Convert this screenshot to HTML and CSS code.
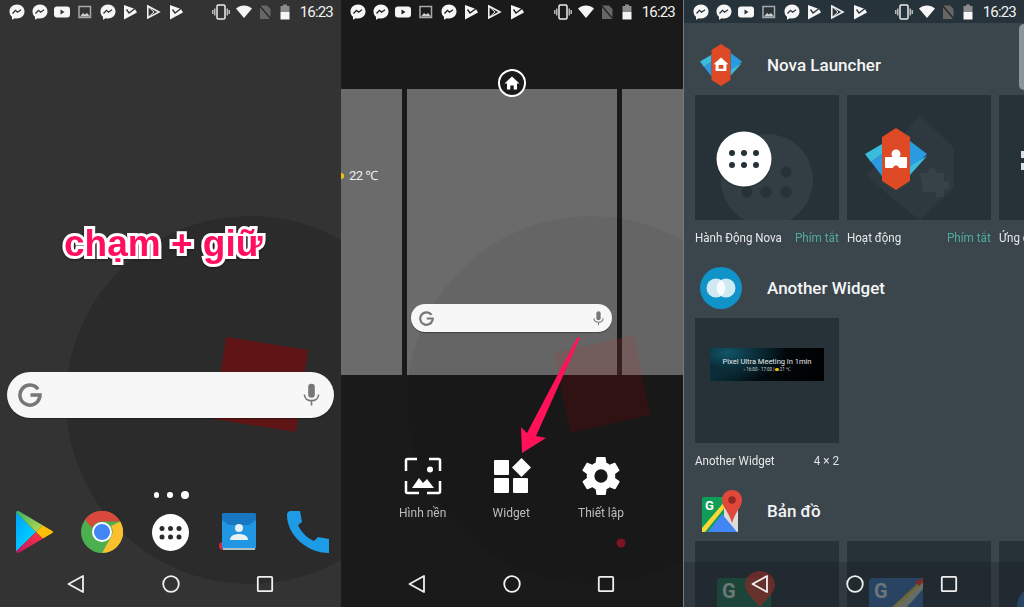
FILE: index.html
```html
<!DOCTYPE html>
<html lang="vi">
<head>
<meta charset="utf-8">
<title>Nova Launcher</title>
<link rel="stylesheet" href="styles.css">
</head>
<body>
<svg class="defs" aria-hidden="true">
  <defs>
    <linearGradient id="pa" x1="0" y1="0" x2="1" y2="1"><stop offset="0" stop-color="#00a0ff"/><stop offset="1" stop-color="#00e2ff"/></linearGradient>
    <linearGradient id="pb" x1="0" y1="0" x2="1" y2="1"><stop offset="0" stop-color="#2fb36b"/><stop offset="1" stop-color="#c8d84a"/></linearGradient>
    <linearGradient id="pc" x1="1" y1="0" x2="0" y2="1"><stop offset="0" stop-color="#ff3a44"/><stop offset="1" stop-color="#c31162"/></linearGradient>
  </defs>
  <symbol id="msg" viewBox="0 0 16 16"><path class="white" d="M8 .5c4.300 0 7.500 3.100 7.500 7s-3.200 7-7.500 7c-.8 0-1.500-.1-2.200-.3L3 15.800v-3C1.400 11.500.5 9.600.5 7.500c0-3.900 3.200-7 7.500-7z"/><path class="cut" d="M3.500 9.500 6.500 6.300 8.500 8.200 12 5.800"/></symbol>
  <symbol id="yt" viewBox="0 0 16 16"><rect class="white" x="0" y="2.500" width="16" height="11" rx="3"/><path class="cutfill" d="M6.500 5.500 10.500 8l-4 2.500z"/></symbol>
  <symbol id="pic" viewBox="0 0 16 16"><rect x="2" y="2.500" width="11.500" height="11" fill="none" stroke="#a9a9a9" stroke-width="1.500"/><path d="M3 12.500 6 9l2 1.500 2-1.500 3 3.500z" fill="#cfcfcf"/></symbol>
  <symbol id="flag" viewBox="0 0 16 16"><path class="white" d="M2 1 13 5 15 8.500 2 15.500z"/><path class="cut" d="M4.500 5.500 7 9 15 3"/></symbol>
  <symbol id="play" viewBox="0 0 16 16"><path d="M2.800 2 14 8 2.800 14z" fill="none" stroke="#eee" stroke-width="1.600"/><path d="M3 2.500 9 8l-6 5.500" fill="none" stroke="#eee" stroke-width="1"/></symbol>
  <symbol id="vib" viewBox="0 0 18 16"><rect x="5" y="1" width="8" height="14" rx="1.300" fill="none" stroke="#eee" stroke-width="1.500"/><path d="M2.800 4.500v7M.8 6v4M15.200 4.500v7M17.200 6v4" stroke="#ddd" stroke-width="1.200"/></symbol>
  <symbol id="wifi" viewBox="0 0 16 16"><path class="white" d="M0 4.500C4.500.5 11.500.5 16 4.500L8 14z"/></symbol>
  <symbol id="nosim" viewBox="0 0 14 16"><path d="M2 1.500h7l3.500 3.500v10H2z" fill="#666"/><path d="M1 1 13 15" stroke="#262626" stroke-width="1.300"/></symbol>
  <symbol id="bat" viewBox="0 0 14 16"><path d="M5 .5h4V2h2.500v6h-9V2H5z" fill="#8b8b8b"/><path class="white" d="M2.500 8h9v7.500h-9z"/></symbol>
  <symbol id="back" viewBox="0 0 18 18"><path d="M1.500 9 16 1v16z" fill="none" stroke="#f0f0f0" stroke-width="1.800" stroke-linejoin="round"/></symbol>
  <symbol id="circ" viewBox="0 0 18 18"><circle cx="9" cy="9" r="7.800" fill="none" stroke="#f0f0f0" stroke-width="1.800"/></symbol>
  <symbol id="sqr" viewBox="0 0 18 18"><rect x="1.800" y="1.800" width="14.400" height="14.400" rx="1" fill="none" stroke="#f0f0f0" stroke-width="1.800"/></symbol>
  <symbol id="g" viewBox="0 0 24 24"><path d="M20 6.200A10 10 0 1 0 21.500 15c.4-1 .5-2 .5-3h-9.500" fill="none" stroke="#777" stroke-width="3.500"/></symbol>
  <symbol id="mic" viewBox="0 0 18 24"><rect x="5.500" y="0" width="7" height="15" rx="3.500" fill="#777"/><path d="M1.500 11.500c0 4 3.300 6.500 7.500 6.500s7.500-2.500 7.500-6.500M9 18v5" fill="none" stroke="#777" stroke-width="1.700"/></symbol>
  <symbol id="novabase" viewBox="0 0 62 62">
    <path d="M0 26 6 34 17 26v22z" fill="#2a9be0"/><path d="M0 26 17 16v10L6 34z" fill="#3bbcdc"/>
    <path d="M62 26 45 13v25l10-5z" fill="#2a9be0"/><path d="M62 28 45 38v9z" fill="#3bbcdc"/>
    <path d="M17 9 31 0l14 9v44L31 62 17 53z" fill="#df4a26"/>
  </symbol>
  <symbol id="maps" viewBox="0 0 42 42">
    <rect x="2" y="7" width="36" height="35" rx="2" fill="#0f9d58"/>
    <path d="M24 7h14v35H24z" fill="#dcdcdc"/>
    <path d="M8 42 22 24l15 18z" fill="#4285f4"/>
    <path d="M2 38 26 10l5 0L5 42H2z" fill="#fdd835"/>
    <path d="M32 0c-6 0-10 4.500-10 10 0 7 7 12 10 23 3-11 10-16 10-23 0-5.500-4-10-10-10z" fill="#e0483b"/>
    <circle cx="32" cy="10" r="3.800" fill="#8e2a22"/>
  </symbol>
</svg>

<main class="screens">

  <section class="phone phone-home">
    <svg class="wall" viewBox="0 0 341 607"><circle cx="250" cy="400" r="184" fill="#2b2b2b"/><path d="M226 337 308 350 296 432 214 419z" fill="#5f1515"/></svg>
    <div class="status">
      <div class="st-left">
        <svg class="si"><use href="#msg"/></svg><svg class="si"><use href="#msg"/></svg><svg class="si"><use href="#yt"/></svg><svg class="si"><use href="#pic"/></svg><svg class="si"><use href="#msg"/></svg><svg class="si"><use href="#flag"/></svg><svg class="si"><use href="#play"/></svg><svg class="si"><use href="#flag"/></svg>
      </div>
      <div class="st-right">
        <svg class="si-v"><use href="#vib"/></svg><svg class="si"><use href="#wifi"/></svg><svg class="si-n"><use href="#nosim"/></svg><svg class="si-n"><use href="#bat"/></svg><span class="clock">16:23</span>
      </div>
    </div>
    <h1 class="hero">chạm + giữ</h1>
    <div class="search">
      <svg class="search-g"><use href="#g"/></svg>
      <svg class="search-m"><use href="#mic"/></svg>
    </div>
    <div class="pager"><i class="dot"></i><i class="dot"></i><i class="dot on"></i></div>
    <div class="dock">
      <svg class="app app-play" viewBox="0 0 37 42">
        <path d="M0 1.500V40.500L20 21z" fill="url(#pa)"/>
        <path d="M0 1.500c.5-1.500 2-1.800 3.500-1L27 14.500 20 21z" fill="url(#pb)"/>
        <path d="M0 40.500c.5 1.500 2 1.800 3.500 1L27 27.500 20 21z" fill="url(#pc)"/>
        <path d="M27 14.500 35.500 19.500c2 1.200 2 2 0 3L27 27.500 20 21z" fill="#ffc107"/>
      </svg>
      <svg class="app app-chrome" viewBox="0 0 42 42">
        <circle cx="21" cy="21" r="21" fill="#4caf50"/>
        <path d="M4 8.500A21 21 0 0 1 39.200 10.500H21A10.500 10.500 0 0 0 11 17z" fill="#d9483b"/>
        <path d="M39.200 10.500A21 21 0 0 1 21 42L30 26A10.500 10.500 0 0 0 30 15z" fill="#fbc02d"/>
        <circle cx="21" cy="21" r="10" fill="#fff"/><circle cx="21" cy="21" r="8" fill="#4285f4"/>
      </svg>
      <svg class="app app-drawer" viewBox="0 0 37 37">
        <circle cx="18.500" cy="18.500" r="18.500" fill="#fff"/>
        <g fill="#2c2c2c"><circle cx="10" cy="14.500" r="2.500"/><circle cx="18.500" cy="14.500" r="2.500"/><circle cx="27" cy="14.500" r="2.500"/><circle cx="10" cy="23" r="2.500"/><circle cx="18.500" cy="23" r="2.500"/><circle cx="27" cy="23" r="2.500"/></g>
      </svg>
      <svg class="app app-contacts" viewBox="0 0 40 40">
        <circle cx="4" cy="34" r="4" fill="#d7263d"/>
        <rect x="3" y="1" width="34" height="36" rx="1.500" fill="#1976c2"/>
        <path d="M4 36h32v2H4z" fill="#b0bec5"/>
        <path d="M3 8 10 13H30L37 8V36H3z" fill="#2196e3"/>
        <circle cx="20" cy="16" r="4" fill="#e8f1f6"/>
        <path d="M11 28c0-4 4-6 9-6s9 2 9 6z" fill="#e8f1f6"/>
      </svg>
      <svg class="app app-phone" viewBox="0 0 42 42">
        <path d="M4 0 13 0 15 11 11 14C14 21 20 27 27 30L31 26 42 28V42C20 42 0 24 0 4 0 2 1 0 4 0z" fill="#1d9be6"/>
      </svg>
    </div>
    <nav class="nav"><svg class="nv"><use href="#back"/></svg><svg class="nv"><use href="#circ"/></svg><svg class="nv"><use href="#sqr"/></svg></nav>
  </section>

  <section class="phone phone-edit">
    <div class="status">
      <div class="st-left">
        <svg class="si"><use href="#msg"/></svg><svg class="si"><use href="#msg"/></svg><svg class="si"><use href="#yt"/></svg><svg class="si"><use href="#pic"/></svg><svg class="si"><use href="#msg"/></svg><svg class="si"><use href="#flag"/></svg><svg class="si"><use href="#play"/></svg><svg class="si"><use href="#flag"/></svg>
      </div>
      <div class="st-right">
        <svg class="si-v"><use href="#vib"/></svg><svg class="si"><use href="#wifi"/></svg><svg class="si-n"><use href="#nosim"/></svg><svg class="si-n"><use href="#bat"/></svg><span class="clock">16:23</span>
      </div>
    </div>
    <div class="homebtn">
      <svg viewBox="0 0 16 16" class="homeicon"><path d="M8 1.500 15.500 8.500H13V14.500H9.700V10.500H6.300V14.500H3V8.500H.5z" fill="#fff"/></svg>
    </div>
    <div class="previews">
      <div class="pv pv-side"><div class="weather"><i class="sun"></i><span>22 ℃</span></div></div>
      <div class="pv pv-main">
        <div class="search search-mini">
          <svg class="mini-g"><use href="#g"/></svg>
          <svg class="mini-m"><use href="#mic"/></svg>
        </div>
      </div>
      <div class="pv pv-right"></div>
    </div>
    <svg class="wall wall-over" viewBox="0 0 342 607">
      <circle cx="250" cy="400" r="184" fill="rgba(0,0,0,.05)"/>
      <path d="M293 335 301 375H217.400L213 353z" fill="rgba(170,60,60,.2)"/>
      <path d="M217.400 375H301L309 415 229 433z" fill="rgba(125,0,0,.25)"/>
      <circle cx="280" cy="543" r="4.500" fill="#7a1420"/>
    </svg>
    <div class="menu">
      <div class="menu-item">
        <svg class="mi" viewBox="0 0 38 38"><path d="M13 2H3.500A1.500 1.500 0 0 0 2 3.500V14M25 2h9.500A1.500 1.500 0 0 1 36 3.500V14M2 24v10.500A1.500 1.500 0 0 0 3.500 36H15M36 24v10.500A1.500 1.500 0 0 1 34.500 36H23" fill="none" stroke="#fff" stroke-width="2.500"/><circle cx="26" cy="12.500" r="3" fill="#fff"/><path d="M8 31 15 21 19 26 23 22 30 31z" fill="#fff"/></svg>
        <span class="mi-label">Hình nền</span>
      </div>
      <div class="menu-item">
        <svg class="mi" viewBox="0 0 38 38"><rect x="1" y="3" width="15" height="15" rx="1" fill="#fff"/><path d="M28.500 1 38 10.500 28.500 20 19 10.500z" fill="#fff"/><rect x="1" y="21" width="15" height="15" rx="1" fill="#fff"/><rect x="20" y="21" width="15" height="15" rx="1" fill="#fff"/></svg>
        <span class="mi-label">Widget</span>
      </div>
      <div class="menu-item">
        <svg class="mi" viewBox="2.200 2 19.600 20"><path fill="#fff" fill-rule="evenodd" d="M19.400 13c.04-.32.1-.66.1-1s-.06-.68-.1-1l2.100-1.650c.2-.15.25-.42.12-.64l-2-3.460c-.12-.22-.38-.3-.6-.22l-2.500 1c-.52-.4-1.060-.72-1.700-.98l-.37-2.650A.5.500 0 0 0 14 2h-4c-.25 0-.46.18-.5.420l-.37 2.650c-.63.260-1.170.580-1.700.98l-2.500-1c-.22-.08-.48 0-.6.220l-2 3.460c-.13.220-.07.490.12.640L4.600 11c-.04.320-.1.660-.1 1s.06.680.1 1l-2.100 1.650c-.19.150-.25.420-.12.640l2 3.460c.12.220.38.300.6.220l2.500-1c.53.400 1.070.720 1.700.980l.37 2.650c.04.240.25.420.5.420h4c.25 0 .46-.18.5-.42l.37-2.650c.63-.26 1.170-.58 1.700-.98l2.500 1c.22.080.48 0 .6-.22l2-3.460c.13-.22.070-.49-.12-.64zM12 15.500a3.500 3.500 0 1 1 0-7 3.500 3.500 0 0 1 0 7z"/></svg>
        <span class="mi-label">Thiết lập</span>
      </div>
    </div>
    <svg class="arrow" viewBox="0 0 342 607"><path d="M236.500 337 186 433 180 427 181 453 205 438 195 436 239 338z" fill="#ff1258"/></svg>
    <nav class="nav"><svg class="nv"><use href="#back"/></svg><svg class="nv"><use href="#circ"/></svg><svg class="nv"><use href="#sqr"/></svg></nav>
  </section>

  <section class="phone phone-widgets">
    <div class="status">
      <div class="st-left">
        <svg class="si"><use href="#msg"/></svg><svg class="si"><use href="#msg"/></svg><svg class="si"><use href="#yt"/></svg><svg class="si"><use href="#pic"/></svg><svg class="si"><use href="#msg"/></svg><svg class="si"><use href="#flag"/></svg><svg class="si"><use href="#play"/></svg><svg class="si"><use href="#flag"/></svg>
      </div>
      <div class="st-right">
        <svg class="si-v"><use href="#vib"/></svg><svg class="si"><use href="#wifi"/></svg><svg class="si-n"><use href="#nosim"/></svg><svg class="si-n"><use href="#bat"/></svg><span class="clock">16:23</span>
      </div>
    </div>
    <div class="scrollthumb"></div>
    <div class="list">
      <header class="app-head">
        <svg class="head-icon" viewBox="0 0 62 62"><use href="#novabase"/><path d="M31 20 42 30h-3v10H23V30h-3zM27.500 31v5.500h7V31z" fill="#fff" fill-rule="evenodd"/></svg>
        <h2 class="head-title">Nova Launcher</h2>
      </header>
      <div class="cards">
        <div class="card-col">
          <div class="card">
            <svg class="card-art" viewBox="0 0 144 125">
              <circle cx="72" cy="85" r="46" fill="#323e44"/>
              <g fill="#263238"><circle cx="91" cy="77" r="5.500"/><circle cx="52" cy="97" r="5.500"/><circle cx="71" cy="97" r="5.500"/><circle cx="91" cy="97" r="5.500"/></g>
              <circle cx="49" cy="65" r="28" fill="#1b2327" opacity=".4"/>
              <circle cx="49" cy="64" r="27.500" fill="#fff"/>
              <g fill="#263238"><circle cx="37" cy="58" r="3"/><circle cx="49" cy="58" r="3"/><circle cx="61" cy="58" r="3"/><circle cx="37" cy="70" r="3"/><circle cx="49" cy="70" r="3"/><circle cx="61" cy="70" r="3"/></g>
            </svg>
          </div>
          <div class="card-label"><span class="lb-l">Hành Động Nova</span><span class="lb-r teal">Phím tắt</span></div>
        </div>
        <div class="card-col">
          <div class="card">
            <svg class="card-art" viewBox="0 0 144 125">
              <path d="M73 20 107 53v40L73 125 47 105 20 80l27-30z" fill="#2d393f"/>
              <path d="M73 78h8c0-6 7-6 8-3v3h8v8h5v8h-5v8H89v-5H76z" fill="#364248"/>
              <svg x="18" y="33" width="62" height="62" viewBox="0 0 62 62"><use href="#novabase"/>
                <rect x="20" y="29" width="22" height="11" rx="1" fill="#fff"/><circle cx="31" cy="26" r="4.500" fill="#fff"/><circle cx="31" cy="40.500" r="3" fill="#df4a26"/>
              </svg>
            </svg>
          </div>
          <div class="card-label"><span class="lb-l">Hoạt động</span><span class="lb-r teal">Phím tắt</span></div>
        </div>
        <div class="card-col">
          <div class="card">
            <svg class="card-art" viewBox="0 0 144 125"><g fill="#fff" opacity=".85"><rect x="22" y="56" width="3" height="7"/><rect x="22" y="68" width="3" height="7"/></g></svg>
          </div>
          <div class="card-label"><span class="lb-l">Ứng dụng</span></div>
        </div>
      </div>
      <header class="app-head">
        <svg class="head-icon" viewBox="0 0 42 42"><circle cx="21" cy="21" r="21" fill="#0f93c9"/><circle cx="16" cy="21" r="9.500" fill="#fff" opacity=".8"/><circle cx="26" cy="21" r="9.500" fill="#fff" opacity=".8"/></svg>
        <h2 class="head-title">Another Widget</h2>
      </header>
      <div class="cards">
        <div class="card-col">
          <div class="card card-center">
            <div class="awidget">
              <span class="aw-title">Pixel Ultra Meeting in 1min</span>
              <span class="aw-sub">▫ 16:00 - 17:00 | <i class="aw-sun"></i> 21 ℃</span>
            </div>
          </div>
          <div class="card-label"><span class="lb-l">Another Widget</span><span class="lb-r size">4 × 2</span></div>
        </div>
      </div>
      <header class="app-head">
        <svg class="head-icon" viewBox="0 0 42 42"><use href="#maps"/><text x="5" y="20" class="mapg">G</text></svg>
        <h2 class="head-title">Bản đồ</h2>
      </header>
      <div class="cards">
        <div class="card-col"><div class="card card-ghost">
          <svg class="ghost-art" viewBox="0 0 144 66"><rect x="22" y="37" width="54" height="40" rx="4" fill="#1b8a5a" opacity=".4"/><text x="27" y="57" class="ghost-g">G</text><path d="M65 30c-8 0-15 6-15 14 0 8 9 14 15 22 6-8 15-14 15-22 0-8-7-14-15-14z" fill="#a5352c" opacity=".75"/></svg>
        </div></div>
        <div class="card-col"><div class="card card-ghost">
          <svg class="ghost-art" viewBox="0 0 144 66"><path d="M22 41a4 4 0 0 1 4-4h50v29H22z" fill="#3a6aa8" opacity=".6"/><text x="27" y="57" class="ghost-g">G</text><path d="M76 40v8L60 66H46z" fill="#808a7e"/><path d="M76 37v5L50 66h-5z" fill="#96843c" opacity=".8"/><path d="M76 37v4L72 45 68 41z" fill="#a5352c"/></svg>
        </div></div>
        <div class="card-col"><div class="card card-ghost">
          <svg class="ghost-art" viewBox="0 0 144 66"><circle cx="40" cy="66" r="22" fill="#3a6aa8" opacity=".6"/></svg>
        </div></div>
      </div>
    </div>
    <nav class="nav nav-over"><svg class="nv"><use href="#back"/></svg><svg class="nv"><use href="#circ"/></svg><svg class="nv"><use href="#sqr"/></svg></nav>
  </section>
</main>
</body>
</html>
```

FILE: styles.css
```css
* { box-sizing: border-box; }
html, body { margin: 0; padding: 0; height: 607px; overflow: hidden; background: #333; }
body { font-family: Roboto, "Noto Sans", sans-serif; color: #fff; }
.defs { position: absolute; width: 0; height: 0; }
.white { fill: #f6f6f6; }
.cut { fill: none; stroke: var(--bar); stroke-width: 1.300; }
.cutfill { fill: var(--bar); }
.mapg { font-family: Roboto, sans-serif; font-weight: 700; font-size: 13px; fill: #fff; }
.ghost-g { font-family: Roboto, sans-serif; font-weight: 700; font-size: 20px; fill: #8a9a96; }

.screens { display: grid; grid-template-columns: 341px 342px 341px; height: 607px; }
.phone { position: relative; height: 607px; overflow: hidden; display: flex; flex-direction: column; }
.phone-home { --bar: #333; background: #333; }
.phone-edit { --bar: #1a1a1a; background: #1a1a1a; }
.phone-widgets { --bar: #27333a; background: #3a464c; border-left: 1px solid #77797b; }

.wall { position: absolute; left: 0; top: 0; width: 100%; height: 607px; }
.wall-over { z-index: 1; pointer-events: none; }

.status { position: relative; z-index: 2; flex: none; height: 24px; display: flex; align-items: center; justify-content: space-between; padding: 0 8px 0 9px; background: var(--bar); }
.phone-widgets .status { height: 23px; }
.st-left { display: flex; gap: 6.700px; align-items: center; }
.st-right { display: flex; gap: 6px; align-items: center; }
.si { width: 16px; height: 16px; display: block; }
.si-v { width: 18px; height: 16px; display: block; }
.si-n { width: 14px; height: 16px; display: block; }
.clock { margin-left: 2px; font-size: 15px; letter-spacing: -.8px; color: #f2f2f2; line-height: 16px; }

.hero { position: relative; z-index: 1; flex: none; height: 42px; margin: 199px 0 0 64px; font: 700 37px/42px "Liberation Sans", Arial, sans-serif; color: #ff0f5e; -webkit-text-stroke: 6px #fff; paint-order: stroke fill; white-space: nowrap; filter: drop-shadow(0 1px 1px rgba(0,0,0,.35)); }

.search { position: relative; z-index: 1; flex: none; margin: 107px 7px 0; height: 46px; border-radius: 23px; background: #f7f7f7; display: flex; align-items: center; justify-content: space-between; padding: 0 14px 0 11px; box-shadow: 0 1px 1px rgba(0,0,0,.35); }
.search-g { width: 24px; height: 24px; }
.search-m { width: 17px; height: 24px; }
.search-mini { z-index: 2; margin: 215px 5px 0 4px; height: 28px; border-radius: 14px; padding: 0 8px 0 8px; }
.mini-g { width: 15px; height: 15px; }
.mini-m { width: 11px; height: 15px; }

.pager { position: relative; z-index: 1; flex: none; height: 10px; margin-top: 72px; display: flex; align-items: center; justify-content: center; gap: 8px; padding-left: 1px; }
.dot { width: 5.500px; height: 5.500px; border-radius: 50%; background: #fff; }
.dot.on { width: 8px; height: 8px; }

.dock { position: relative; z-index: 1; flex: none; margin-top: 10px; height: 44px; display: flex; align-items: center; padding-left: 16px; }
.app { display: block; flex: none; }
.app-play { width: 37px; height: 42px; }
.app-chrome { width: 42px; height: 42px; margin-left: 28px; }
.app-drawer { width: 37px; height: 37px; margin-left: 29px; }
.app-contacts { width: 40px; height: 40px; margin-left: 30px; }
.app-phone { width: 42px; height: 42px; margin-left: 28px; }

.nav { position: relative; z-index: 2; flex: none; display: flex; gap: 76.500px; padding-left: 67px; height: 18px; margin-top: 21px; }
.nv { width: 18px; height: 18px; display: block; }
.nav-over { position: absolute; left: 0; right: 0; bottom: 0; height: 45px; margin: 0; padding-top: 13px; background: rgba(15,20,25,.25); z-index: 3; }

.homebtn { position: relative; z-index: 3; flex: none; align-self: center; width: 28px; height: 28px; margin: 45px 0 -8px 0; border: 2px solid #fff; border-radius: 50%; background: #1a1a1a; display: flex; align-items: center; justify-content: center; }
.homeicon { width: 16px; height: 16px; }
.previews { flex: none; height: 286px; display: flex; gap: 5px; }
.pv { background: #6b6b6b; flex: none; }
.pv-side { width: 61px; padding-top: 78px; overflow: hidden; }
.pv-main { width: 210px; display: flow-root; }
.pv-right { width: 62px; }
.weather { display: flex; align-items: center; gap: 5px; margin-left: -3px; font-size: 13px; letter-spacing: -.5px; line-height: 18px; color: #eee; }
.sun { width: 6px; height: 6px; border-radius: 50%; background: #f4c20d; flex: none; }

.menu { position: relative; z-index: 2; flex: none; margin-top: 82px; display: flex; padding-left: 37px; }
.menu-item { width: 89px; display: flex; flex-direction: column; align-items: center; }
.mi { width: 38px; height: 38px; display: block; }
.mi-label { margin-top: 9px; font-size: 13px; line-height: 18px; color: #bdbdbd; white-space: nowrap; transform: scaleX(.92); }

.arrow { position: absolute; left: 0; top: 0; width: 100%; height: 607px; z-index: 3; pointer-events: none; }
.phone-edit .nav { margin-top: 53px; }

.scrollthumb { position: absolute; right: 0; top: 24px; width: 5px; height: 66px; background: #8d9498; border-radius: 5px 0 0 5px; z-index: 2; }
.list { flex: none; padding-left: 11px; width: 340px; }
.app-head { height: 60px; display: flex; align-items: center; padding-left: 5px; margin-top: 0; }
.list > .app-head:first-child { margin-top: 12px; }
.head-icon { width: 42px; height: 42px; flex: none; display: block; }
.head-title { margin: 0 0 0 25px; font-size: 17px; font-weight: 500; color: #f5f5f5; white-space: nowrap; }
.cards { display: flex; gap: 8px; }
.card-col { width: 144px; flex: none; }
.card { height: 125px; background: #263238; overflow: hidden; }
.card-art { width: 144px; height: 125px; display: block; }
.card-center { padding: 30px 15px 0; }
.card-ghost { height: 66px; }
.ghost-art { width: 144px; height: 66px; display: block; }
.card-label { height: 34px; margin-bottom: 4px; display: flex; justify-content: space-between; align-items: center; font-size: 13px; color: #e8e8e8; white-space: nowrap; }
.lb-l { display: inline-block; flex: none; margin-right: -12px; transform: scaleX(.89); transform-origin: left center; }
.lb-r { display: inline-block; flex: none; transform: scaleX(.9); transform-origin: right center; }
.teal { color: #4fa89a; }
.size { color: #e0e0e0; }
.awidget { width: 114px; height: 33px; background: radial-gradient(60px 30px at 15% 15%, #11566a 0%, #0a2d38 50%, transparent 100%), linear-gradient(100deg, #0a3340 0%, #020a0d 45%, #000 100%); display: flex; flex-direction: column; align-items: center; justify-content: center; gap: 1px; }
.aw-title { font-size: 7.500px; line-height: 9px; color: #e6e6e6; white-space: nowrap; }
.aw-sub { font-size: 4.500px; line-height: 6px; color: #cfcfcf; white-space: nowrap; display: flex; align-items: center; gap: 1px; }
.aw-sun { width: 3.500px; height: 3.500px; border-radius: 50%; background: #f4c20d; display: inline-block; }
```
